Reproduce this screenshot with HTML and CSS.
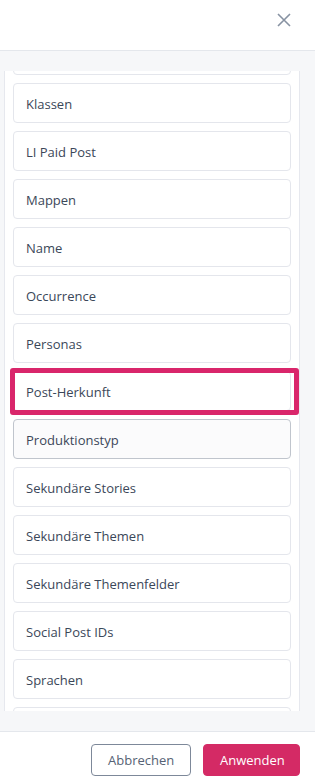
FILE: index.html
```html
<!DOCTYPE html>
<html lang="de">

<head>
    <meta charset="UTF-8">
    <meta name="viewport" content="width=device-width, initial-scale=1.0">
    <title>Felder auswählen</title>
    <link rel="stylesheet" href="styles.css">
</head>

<body>

    <div class="drawer">
        <div class="drawer-header">
            <button class="close-button" aria-label="Schließen">
                <svg width="14" height="14" viewBox="0 0 14 14">
                    <path d="M1 1 L13 13 M13 1 L1 13" stroke="#8792a2" stroke-width="1.6" fill="none" />
                </svg>
            </button>
        </div>

        <!-- Field list (scrolled, first and last rows only partly visible) -->
        <div class="drawer-body">
            <div class="field-panel">
                <div class="field-list">
                    <div class="field-item" aria-hidden="true"></div>
                    <div class="field-item">Klassen</div>
                    <div class="field-item">LI Paid Post</div>
                    <div class="field-item">Mappen</div>
                    <div class="field-item">Name</div>
                    <div class="field-item">Occurrence</div>
                    <div class="field-item">Personas</div>
                    <div class="field-item highlighted">Post-Herkunft</div>
                    <div class="field-item hovered">Produktionstyp</div>
                    <div class="field-item">Sekundäre Stories</div>
                    <div class="field-item">Sekundäre Themen</div>
                    <div class="field-item">Sekundäre Themenfelder</div>
                    <div class="field-item">Social Post IDs</div>
                    <div class="field-item">Sprachen</div>
                    <div class="field-item" aria-hidden="true"></div>
                </div>
            </div>
        </div>

        <div class="drawer-footer">
            <button class="btn btn-secondary">Abbrechen</button>
            <button class="btn btn-primary">Anwenden</button>
        </div>
    </div>

</body>

</html>
```

FILE: styles.css
```css
body {
    font-family: "Open Sans", Arial, sans-serif;
    margin: 0;
    padding: 0;
    background-color: #fff;
    color: #3b4759;
}

.drawer {
    width: 315px;
    height: 784px;
    display: flex;
    flex-direction: column;
}

/* Header with close button */
.drawer-header {
    height: 51px;
    border-bottom: 1px solid #e4e7ec;
    display: flex;
    justify-content: flex-end;
    padding: 12px 23px 0 0;
    box-sizing: border-box;
}

.close-button {
    background: none;
    border: none;
    padding: 0;
    width: 16px;
    height: 16px;
    cursor: pointer;
    display: flex;
    align-items: center;
    justify-content: center;
}

/* Scrolling area */
.drawer-body {
    height: 680px;
    background-color: #f6f7f9;
    padding: 20px 15px 20px 4px;
    box-sizing: border-box;
}

.field-panel {
    height: 640px;
    background-color: #fff;
    border-left: 1px solid #e6e8ee;
    border-right: 1px solid #e6e8ee;
    padding: 0 8px;
    overflow: hidden;
}

.field-list {
    display: flex;
    flex-direction: column;
    gap: 8px;
    margin-top: -36px;
}

.field-item {
    position: relative;
    height: 40px;
    box-sizing: border-box;
    border: 1px solid #e4e6ec;
    border-radius: 4px;
    padding: 1px 12px 0;
    display: flex;
    align-items: center;
    font-size: 13px;
    background-color: #fff;
    flex-shrink: 0;
}

.field-item.hovered {
    background-color: #fbfbfc;
    border-color: #c0c5cd;
}

/* Annotation frame around the selected field */
.field-item.highlighted::after {
    content: "";
    position: absolute;
    top: -4px;
    left: -4px;
    right: -9px;
    bottom: -5px;
    border: 5px solid #d9266b;
    border-radius: 3px;
}

/* Footer buttons */
.drawer-footer {
    flex: 1;
    border-top: 1px solid #e4e7ec;
    display: flex;
    justify-content: flex-end;
    align-items: flex-start;
    gap: 12px;
    padding: 12px 15px 0 0;
}

.btn {
    font-family: "Open Sans", Arial, sans-serif;
    font-size: 13px;
    height: 32px;
    border-radius: 4px;
    cursor: pointer;
    padding: 0 16px;
}

.btn-secondary {
    width: 100px;
    background-color: #fff;
    border: 1px solid #7d8899;
    color: #566274;
}

.btn-primary {
    width: 97px;
    background-color: #d42a65;
    border: 1px solid #d42a65;
    color: #fff;
}
```
